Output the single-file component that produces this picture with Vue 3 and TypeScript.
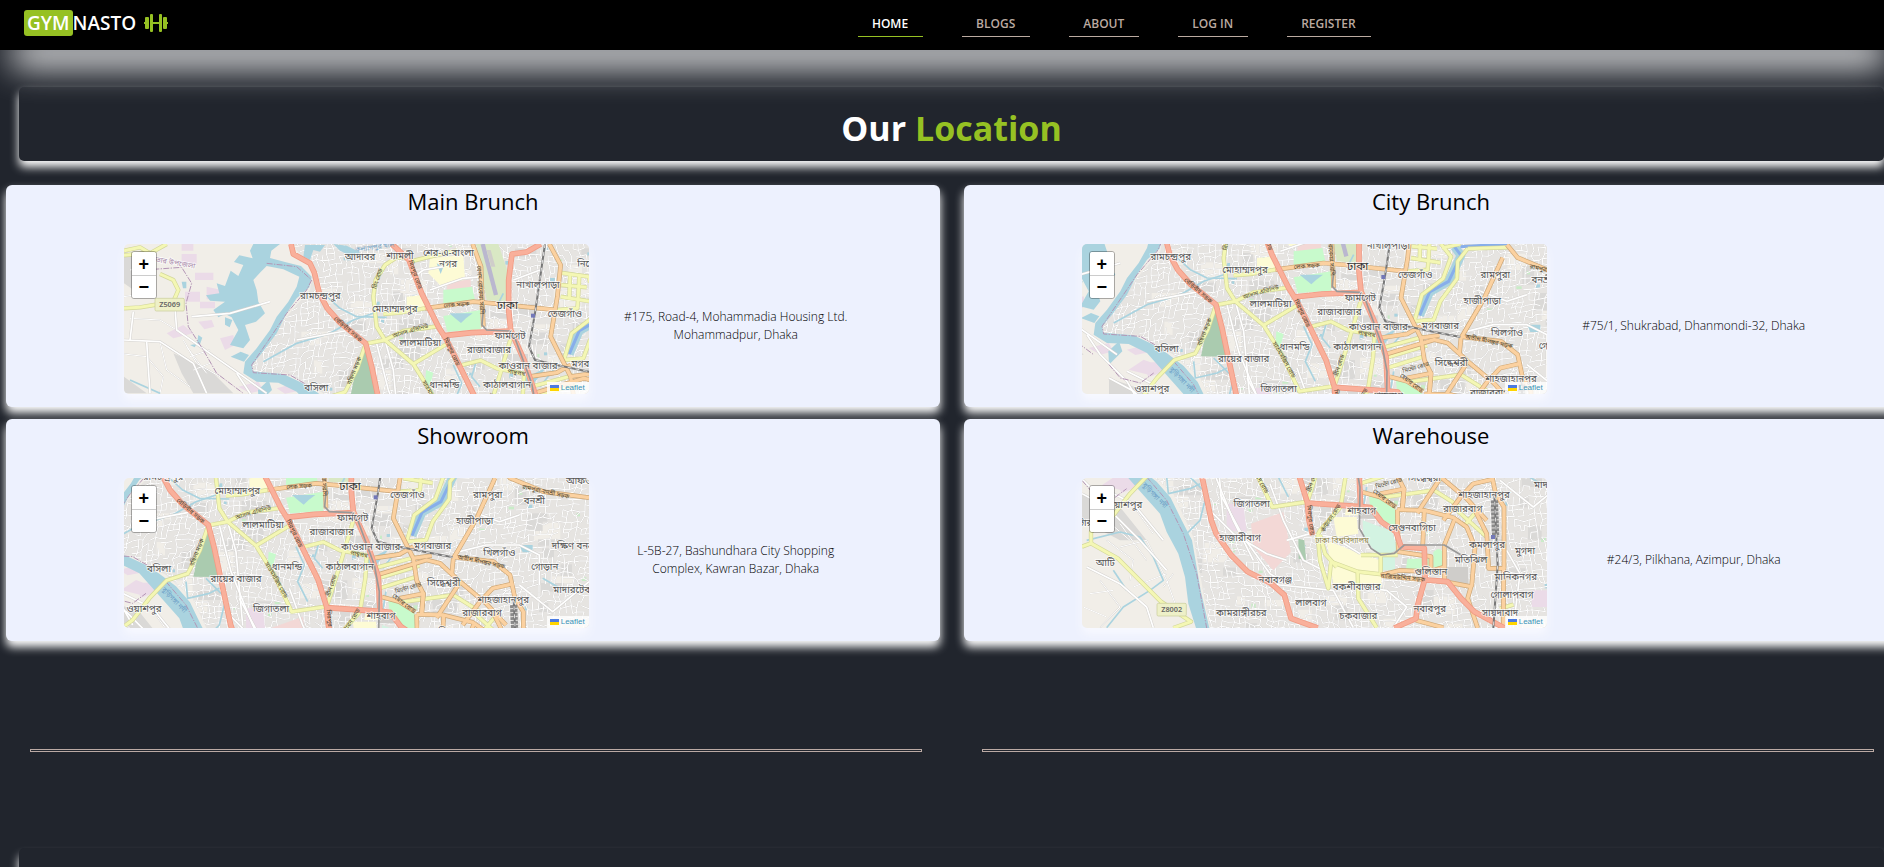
<script setup lang="ts">
import { reactive } from 'vue'

interface NavItem { label: string; active?: boolean }
interface Branch { id: string; title: string; address: string; x: number; y: number }
interface Label { t: string; x: number; y: number; r?: number; k?: string }

const nav: NavItem[] = [
  { label: 'HOME', active: true },
  { label: 'BLOGS' },
  { label: 'ABOUT' },
  { label: 'LOG IN' },
  { label: 'REGISTER' },
]

const branches: Branch[] = [
  { id: 'main', title: 'Main Brunch', address: '#175, Road-4, Mohammadia Housing Ltd. Mohammadpur, Dhaka', x: 42, y: 42 },
  { id: 'city', title: 'City Brunch', address: '#75/1, Shukrabad, Dhanmondi-32, Dhaka', x: 365, y: 158 },
  { id: 'showroom', title: 'Showroom', address: 'L-5B-27, Bashundhara City Shopping Complex, Kawran Bazar, Dhaka', x: 514, y: 199 },
  { id: 'warehouse', title: 'Warehouse', address: '#24/3, Pilkhana, Azimpur, Dhaka', x: 446, y: 513 },
]

const VIEW_W = 1395
const VIEW_H = 450
const zoom = reactive<Record<string, number>>({ main: 0, city: 0, showroom: 0, warehouse: 0 })

function viewBox(b: Branch): string {
  const s = Math.pow(2, -zoom[b.id])
  const w = VIEW_W * s
  const h = VIEW_H * s
  return `${b.x + (VIEW_W - w) / 2} ${b.y + (VIEW_H - h) / 2} ${w} ${h}`
}
function step(id: string, d: number) {
  zoom[id] = Math.max(0, Math.min(4, zoom[id] + d))
}

// Minor streets: a jittered net that bends slowly over the city.
function streetNet(): string {
  let seed = 7
  const rnd = () => {
    seed = (seed * 16807) % 2147483647
    return seed / 2147483647
  }
  const cell = 17
  const cols = 114
  const rows = 60
  const pts: number[][][] = []
  for (let j = 0; j < rows; j++) {
    const row: number[][] = []
    for (let i = 0; i < cols; i++) {
      const x = 10 + i * cell
      const y = 0 + j * cell
      row.push([
        Math.round(x + Math.sin(y / 130) * 24 + (rnd() - 0.5) * 10),
        Math.round(y + Math.sin(x / 170) * 26 + (rnd() - 0.5) * 10),
      ])
    }
    pts.push(row)
  }
  let d = ''
  for (let j = 0; j < rows - 1; j++) {
    for (let i = 0; i < cols - 1; i++) {
      const [x, y] = pts[j][i]
      if (rnd() < 0.68) d += `M${x},${y}L${pts[j][i + 1].join()}`
      if (rnd() < 0.68) d += `M${x},${y}L${pts[j + 1][i].join()}`
    }
  }
  return d
}
const streets = streetNet()

// Scattered blocks of slightly different land use.
function blocks(): { x: number; y: number; w: number; h: number; k: string }[] {
  let seed = 91
  const rnd = () => {
    seed = (seed * 16807) % 2147483647
    return seed / 2147483647
  }
  const kinds = ['dense', 'dense', 'plain', 'plain', 'pond', 'grass']
  return Array.from({ length: 190 }, (_, i) => {
    const k = kinds[i % kinds.length]
    const small = k === 'pond' || k === 'grass'
    return {
      x: Math.round(560 + rnd() * 1340),
      y: Math.round(40 + rnd() * 920),
      w: Math.round(small ? 6 + rnd() * 12 : 20 + rnd() * 60),
      h: Math.round(small ? 5 + rnd() * 9 : 18 + rnd() * 40),
      k,
    }
  })
}
const land = blocks()

const urban =
  'M545,42 L610,120 600,180 530,260 425,405 430,428 530,430 640,490 720,560 780,690 800,800 830,963 1909,963 1909,42Z'

const lanes: string[] = [
  'M195,232 L200,300 300,370 400,440 470,490', 'M42,330 L150,335 250,400 290,490', 'M110,335 L120,490',
  'M245,260 L360,250 480,215', 'M60,330 L70,245', 'M560,330 L720,300 765,338', 'M825,330 L850,420 870,640',
  'M800,340 L835,480 900,640 960,760', 'M960,180 L1060,145 1115,140', 'M900,150 L940,120 1000,110',
  'M1210,150 L1290,120', 'M1010,530 L1050,640 1110,760 1190,800', 'M860,560 L930,690 1010,800 1060,830',
  'M820,600 L900,680 1000,740 1060,760', 'M1000,830 L1200,850 1260,962', 'M1270,840 L1360,850 1420,900 1380,962',
  'M1520,420 L1600,400 1700,400 1760,430 1760,520', 'M1560,300 L1640,330 1700,310', 'M1700,520 L1800,600 1909,510',
  'M1720,730 L1760,800 1740,962', 'M460,780 L560,830 640,900 660,962', 'M446,560 L520,600 620,700 700,790',
  'M500,540 L600,590 690,700', 'M1060,700 L1130,680 1200,690 1280,740', 'M380,430 L420,490 500,570 540,640',
]
const farmLanes =
  'M42,372 L110,380 160,440 150,490 M150,335 L170,420 240,470 M200,300 L150,270 60,265 M220,330 L260,400 330,440 M240,380 L300,360 M250,420 L300,400 M230,350 L290,430 M520,700 L600,760 590,820 M560,650 L640,760 M500,820 L560,900 500,962 M600,840 L700,800 M640,700 L700,820 740,930 M470,860 L540,850 M610,610 L660,680 M560,720 L640,700 M520,640 L590,700 M690,840 L720,800 M450,900 L520,930 M80,90 L110,130 70,180 M60,120 L120,110 M42,200 L100,190'
const streams: string[] = [
  'M460,395 L560,340 660,310 730,270 790,250', 'M640,190 L690,235 740,260 830,262', 'M760,500 L820,560 800,640 740,700',
  'M1030,405 L1055,460 1035,510 1065,570', 'M1100,390 L1085,440 1110,470', 'M460,700 L560,675 620,690 660,750 690,820 650,850 570,900 520,962',
  'M540,790 L580,850', 'M1180,190 L1160,230', 'M1290,470 L1330,420', 'M1770,500 L1840,540', 'M1300,540 L1290,600',
  'M60,450 L150,490', 'M700,510 L705,560 770,545 800,530', 'M1050,850 L1060,900',
]
const yellow: string[] = [
  'M42,235 L90,232 150,222', 'M150,132 L190,150 205,180 190,215', 'M42,62 L90,52 120,70 170,42', 'M42,76 L120,68',
  'M900,85 L860,82 825,105 797,150 790,200 800,290 825,330', 'M820,252 L870,248 945,235', 'M767,341 L825,330 880,303 990,288',
  'M825,330 L910,402 965,490 1017,600 1118,585', 'M910,402 L1010,342', 'M900,95 L960,80 1040,62',
  'M767,341 L742,416 705,486 642,506 590,560 540,625 473,674 473,709 446,719', 'M473,709 L553,754 613,814 683,884 773,944 720,963',
  'M1052,406 L1112,391 1162,416 1242,431', 'M1202,326 L1165,450 1122,586', 'M1242,436 L1238,500 1222,600 1160,670 1153,684',
  'M1153,684 L1160,760 1185,844 1193,764 1273,794 1345,802', 'M1160,684 L1175,740 1210,780', 'M1283,744 L1393,744', 'M1273,796 L1275,874 1330,962',
  'M1350,128 L1437,140 1440,158', 'M1352,200 L1440,214', 'M1380,132 L1378,208', 'M1408,136 L1404,212', 'M1354,165 L1430,172', 'M1404,212 L1402,235 1340,240',
  'M1442,158 L1472,196 1448,262 1385,310 1362,390', 'M1522,172 L1492,210 1490,262 1440,330 1420,385 1362,390', 'M1522,172 L1645,168', 'M1445,170 L1500,158',
  'M1272,468 L1390,436', 'M1275,500 L1400,462', 'M1280,530 L1395,494', 'M1342,572 L1502,550 1582,600', 'M1640,600 L1590,660', 'M1560,600 L1660,690',
  'M1342,804 L1342,745', 'M1740,893 L1700,905',
]
const orange: string[] = [
  'M945,235 L1090,215 1190,224 1240,230 1340,240', 'M1088,42 L1113,110 1120,290', 'M1318,42 L1352,105 1342,200 1322,320 1382,440 1392,506 1412,546 1407,606',
  'M1627,199 L1572,320 1502,440 1497,490', 'M1640,160 L1672,199 1772,240 1909,258', 'M1272,490 L1422,445 1462,455 1522,510 1600,575 1660,640',
  'M1502,436 L1622,450 1672,490 1687,560 1712,600 1712,784 1666,784 1660,680 1620,600', 'M1711,780 L1710,963', 'M1392,608 L1472,610 1560,632 1600,660 1625,720 1615,839',
  'M1522,512 L1452,618', 'M1473,610 L1468,720', 'M1682,516 L1620,530 1582,570 1530,640', 'M1393,734 L1493,749 1493,800', 'M1343,804 L1400,790 1485,794 1533,780',
  'M1563,639 L1533,714 1533,824 1613,839 1603,874 1633,963', 'M1258,440 L1340,428 1382,405', 'M1380,440 L1437,432', 'M1407,606 L1412,546 1340,560', 'M1345,806 L1478,819 1543,824', 'M1392,608 L1395,734',
  'M1448,940 L1530,962', 'M1288,556 L1340,570 1388,600',
]
const red: string[] = [
  'M543,42 L550,72 600,100 613,128 628,190 652,235 690,278 767,340 785,410 802,490 834,640 848,679 893,744 943,794 1013,829 1053,864 1073,934 1153,963',
  'M845,42 L897,90 935,190 985,290 1010,330 1050,410 1097,506 1122,586 1127,640 1138,684', 'M1003,317 L1085,308 1205,303',
  'M1292,42 L1250,66 1206,72 1196,150 1196,240 1202,300 1242,390 1277,496 1282,600', 'M1122,588 L1283,599 1312,602 1345,645 1388,674 1403,719 1473,724 1475,815 1453,894 1448,934 1383,963',
  'M1478,819 L1543,824 1583,874 1623,914 1713,963',
]

const labels: Label[] = [
  { t: 'আদাবর', x: 750, y: 90 }, { t: 'শ্যামলী', x: 870, y: 86 }, { t: 'শের-এ-বাংলা', x: 1015, y: 78 }, { t: 'নগর', x: 1014, y: 112 },
  { t: 'নাখালপাড়া', x: 1284, y: 174 }, { t: 'রামচন্দ্রপুর', x: 631, y: 206 }, { t: 'মোহাম্মদপুর', x: 854, y: 246 },
  { t: 'ঢাকা', x: 1192, y: 236, k: 'big' }, { t: 'তেজগাঁও', x: 1364, y: 260 }, { t: 'লালমাটিয়া', x: 931, y: 348 },
  { t: 'ফার্মগেট', x: 1200, y: 328 }, { t: 'রাজাবাজার', x: 1137, y: 370 }, { t: 'কাওরান বাজার', x: 1254, y: 416 }, { t: 'মগবাজার', x: 1440, y: 412 },
  { t: 'ধানমন্ডি', x: 1003, y: 475 }, { t: 'কাঠালবাগান', x: 1191, y: 475 }, { t: 'বসিলা', x: 619, y: 482 }, { t: 'রায়ের বাজার', x: 850, y: 512 },
  { t: 'ওয়াশপুর', x: 574, y: 602 }, { t: 'জিগাতলা', x: 955, y: 601 }, { t: 'রামপুরা', x: 1605, y: 260 }, { t: 'বনশ্রী', x: 1745, y: 276 },
  { t: 'হাজীপাড়া', x: 1566, y: 338 }, { t: 'খিলগাঁও', x: 1640, y: 434 }, { t: 'গোড়ান', x: 1776, y: 474 }, { t: 'সিদ্ধেশ্বরী', x: 1473, y: 523 },
  { t: 'শাহজাহানপুর', x: 1652, y: 573 }, { t: 'রাজারবাগ', x: 1588, y: 614 }, { t: 'দক্ষিণ বনশ্রী', x: 1866, y: 412 }, { t: 'মাদারটেক', x: 1860, y: 544 },
  { t: 'আফতাবনগর', x: 1918, y: 216 }, { t: 'নিকেতন', x: 1450, y: 110 }, { t: 'শাহবাগ', x: 1285, y: 622 }, { t: 'সেগুনবাগিচা', x: 1436, y: 671 },
  { t: 'হাজারীবাগ', x: 920, y: 701 }, { t: 'ঢাকা বিশ্ববিদ্যালয়', x: 1226, y: 708, k: 'uni' }, { t: 'কমলাপুর', x: 1661, y: 722 }, { t: 'মুগদা', x: 1775, y: 740 },
  { t: 'মতিঝিল', x: 1613, y: 768 }, { t: 'গুলিস্তান', x: 1493, y: 803 }, { t: 'মানিকনগর', x: 1747, y: 819 }, { t: 'গোলাপবাগ', x: 1736, y: 872 },
  { t: 'আটি', x: 516, y: 776 }, { t: 'ঘাটারচর', x: 460, y: 657 }, { t: 'নবাবগঞ্জ', x: 1026, y: 828 }, { t: 'বকশীবাজার', x: 1270, y: 848 }, { t: 'লালবাগ', x: 1133, y: 896 },
  { t: 'নবাবপুর', x: 1489, y: 914 }, { t: 'সায়দাবাদ', x: 1700, y: 928 }, { t: 'চকবাজার', x: 1275, y: 936 }, { t: 'কামরাঙ্গীরচর', x: 924, y: 928 },
  { t: 'সাভার উপজেলা', x: 185, y: 104, r: 10, k: 'area' }, { t: 'কল্যাণপুর খাল', x: 795, y: 58, r: -8, k: 'river' }, { t: 'বুড়িগঙ্গা নদী', x: 660, y: 570, r: 46, k: 'river' },
  { t: 'মিরপুর রোড', x: 910, y: 136, r: 70, k: 'road' }, { t: 'মিরপুর রোড', x: 1020, y: 368, r: 65, k: 'road' }, { t: 'বেড়িবাঁধ সড়ক', x: 710, y: 302, r: 41, k: 'road' },
  { t: 'রিং রোড', x: 808, y: 148, r: -72, k: 'road' }, { t: 'লেক সড়ক', x: 1040, y: 230, r: -4, k: 'road' }, { t: 'আসাদ এভিনিউ', x: 903, y: 308, r: -16, k: 'road' },
  { t: 'বেগম রোকেয়া সরণি', x: 1106, y: 180, r: 86, k: 'road' }, { t: 'বছিলা সড়ক', x: 738, y: 424, r: -68, k: 'road' }, { t: 'সাতমসজিদ রোড', x: 966, y: 508, r: 60, k: 'road' },
  { t: 'পান্থপথ', x: 1218, y: 434, r: 10, k: 'road' }, { t: 'গ্রীন রোড', x: 1142, y: 524, r: -72, k: 'road' }, { t: 'রামপুরা-বনশ্রী সড়ক', x: 1778, y: 246, r: 12, k: 'road' },
  { t: 'অতীশ দীপঙ্কর সড়ক', x: 1585, y: 456, r: 12, k: 'road' }, { t: 'মিন্টো রোড', x: 1368, y: 534, r: -16, k: 'road' }, { t: 'হেয়ার রোড', x: 1350, y: 580, r: 38, k: 'road' },
  { t: 'মিরপুর রোড', x: 1126, y: 640, r: 84, k: 'road' }, { t: 'কাঁটাবন রোড', x: 1198, y: 636, r: -58, k: 'road' }, { t: 'নাজিমউদ্দিন সড়ক', x: 1408, y: 818, r: 5, k: 'road' },
]

const shields = [
  { t: 'Z5069', x: 135, y: 205 },
  { t: 'Z8002', x: 671, y: 889 },
]
</script>

<template>
  <div class="page">
    <header class="topbar">
      <a class="brand" href="#home">
        <span class="brand-mark">GYM</span><span class="brand-rest">NASTO</span>
        <svg class="dumbbell" viewBox="0 0 24 18" aria-hidden="true">
          <path d="M6 1a1 1 0 0 1 1-1h1a1 1 0 0 1 1 1v7h6V1a1 1 0 0 1 1-1h1a1 1 0 0 1 1 1v16a1 1 0 0 1-1 1h-1a1 1 0 0 1-1-1v-7H9v7a1 1 0 0 1-1 1H7a1 1 0 0 1-1-1zM1 4a1 1 0 0 1 1-1h2a1 1 0 0 1 1 1v10a1 1 0 0 1-1 1H2a1 1 0 0 1-1-1v-4H0V8h1zM19 4a1 1 0 0 1 1-1h2a1 1 0 0 1 1 1v4h1v2h-1v4a1 1 0 0 1-1 1h-2a1 1 0 0 1-1-1z" />
        </svg>
      </a>
      <nav class="nav" aria-label="Main">
        <a v-for="n in nav" :key="n.label" href="#" class="nav-link" :class="{ active: n.active }">{{ n.label }}</a>
      </nav>
    </header>

    <svg class="defs" aria-hidden="true">
      <defs>
        <clipPath id="urban-clip"><path :d="urban" /></clipPath>
        <g id="city">
          <rect x="0" y="0" width="2000" height="1000" class="ground" />
          <path class="dense" d="M42,160 L42,60 90,90 130,150 100,200Z M190,370 L300,420 370,490 250,490 215,430Z M42,440 L110,490 42,490Z M446,560 L560,600 640,700 560,700 446,640Z" />
          <path :d="urban" class="urban" />
          <g clip-path="url(#urban-clip)">
            <rect v-for="(b, i) in land" :key="i" :x="b.x" :y="b.y" :width="b.w" :height="b.h" :class="b.k" />
            <path :d="streets" class="street-case" />
            <path :d="streets" class="street" />
          </g>
          <path :d="farmLanes" class="street-case" />
          <path :d="farmLanes" class="street" />
          <path class="campus" d="M960,85 L1060,75 1065,150 990,165 955,130Z M890,200 L940,195 950,235 890,240Z M1200,630 L1270,630 1275,680 1210,690Z M1180,700 L1280,740 1340,760 1345,840 1200,830Z M1240,590 L1275,590 1275,625 1235,625Z" />
          <path class="pink" d="M1012,158 L1082,148 1084,198 1010,205Z M953,650 L1050,615 1073,735 1020,790 960,720Z" />
          <path class="lilac" d="M215,42h35v20h-35z M215,72h45v32h-45z M255,128h55v22h-55z M290,170l45,10v28h-45z M225,185h45v30h-45z M270,215h45v20h-45z M330,325l40,-10 5,30 -30,15z M265,275l40,-5 8,20 -30,8z M170,310l50,-25 30,25 -60,15z M385,470l60,-15 15,25 -40,10z M500,475l45,-12 20,20 -40,8z M505,535l45,-30 40,15 -25,30z M540,513h75l-10,30 -40,15z M880,590h50l10,85 -60,-5z M1795,850h50v50h-50z" />
          <path class="park" d="M1000,180 L1086,170 1095,210 1000,222Z M1000,258 L1112,240 1112,298 1012,305Z M1306,554 L1385,604 1388,650 1370,662 1345,645 1310,600Z M1422,755h70v38h-75z M1500,735q20,-20 30,5v40h-30z M948,420l22,8 -10,40 -15,-5z" />
          <path class="park soft" d="M1288,640 L1375,672 1393,725 1370,740 1330,738 1290,690Z M1345,740h40v50h-40z" />
          <path class="airfield" d="M1098,42 L1165,42 1205,160 1190,215 1130,210Z" />
          <path class="runway" d="M1118,42 L1158,195" />
          <path class="wood" d="M766,345 L742,400 722,495 800,496 790,430Z M1095,695l18,5 5,60 -22,-5z" />
          <path class="grey" d="M1540,780h65v50h-65z M1130,60h12l14,50h-12z M1280,615h55l-8,20h-50z" />
          <path class="water" d="M430,42 L510,42 484,62 480,84 525,96 573,108 605,140 598,172 560,205 530,250 500,310 455,370 426,405 428,424 520,432 575,458 620,486 670,524 712,572 742,634 776,700 790,780 802,850 828,963 788,963 765,890 755,810 735,740 700,675 680,620 640,575 600,530 560,485 505,458 440,455 400,430 405,395 440,355 480,300 500,260 535,215 560,170 568,140 520,118 470,108 452,126 430,150 440,180 445,215 465,250 438,275 405,285 420,330 400,355 360,345 385,300 365,262 345,252 325,262 310,240 345,215 300,212 288,196 328,190 320,160 345,168 362,122 385,138 400,105 372,96 388,76 428,85 420,62Z" />
          <path class="water" d="M362,380l30,-15 25,10 -15,20z M345,262l22,8 -8,22 -14,-8z M240,345l20,-3 -6,10z M265,315l12,8 -8,22 -8,-5z M215,155h14v20h-10z M585,45h60l-15,20 -20,-5 -10,30 -20,-10z M670,42l40,5 40,20 -20,15 -40,-20z M1018,250h70l-20,15 -15,14 -15,-12z M980,100l20,10 -8,22z M1245,445l38,-20 25,-12 -35,45 -25,12z M1700,400h40v22h-30z M446,520l40,-40 -10,-30 -32,30z" />
          <path v-for="d in streams" :key="d" :d="d" class="stream" />
          <path class="lake-edge" d="M1482,166 L1502,192 1465,270 1408,302 1378,372" />
          <path class="lake" d="M1482,166 L1502,192 1465,270 1408,302 1378,372 M1500,166 L1640,158" />
          <path v-for="d in lanes" :key="d" :d="d" class="lane-case" />
          <path v-for="d in lanes" :key="d + 'f'" :d="d" class="lane" />
          <path class="border-line" d="M130,118 L215,112 245,160 228,220 235,290 280,360 320,430 400,490 M470,100 L560,110 605,150 590,180 530,250 425,405 430,428 540,435 600,470 M446,520 L480,560 540,575 580,545 M640,510 L700,580 750,680 790,800 820,963" />
          <path v-for="d in yellow" :key="d" :d="d" class="yellow-case" />
          <path v-for="d in yellow" :key="d + 'f'" :d="d" class="yellow" />
          <path v-for="d in orange" :key="d" :d="d" class="orange-case" />
          <path v-for="d in orange" :key="d + 'f'" :d="d" class="orange" />
          <path v-for="d in red" :key="d" :d="d" class="red-case" />
          <path v-for="d in red" :key="d + 'f'" :d="d" class="red" />
          <path class="metro" d="M1120,240 L1116,285 1130,300 1198,303 1215,325 1265,460 1280,540 1278,664 1313,724 1343,744 1383,739 1413,714 1533,714 1583,744" />
          <path class="rail" d="M1305,42 L1275,250 1257,350 1275,390 1340,405 1437,425 1500,437" />
          <path class="rail-dash" d="M1305,42 L1275,250 1257,350 1275,390 1340,405 1437,425 1500,437" />
          <path class="rail-yard" d="M1683,580 L1687,690" />
          <path class="rail" d="M1683,560 L1693,774 1680,963" />
          <path class="rail-dash" d="M1683,560 L1693,774 1680,963" />
          <rect x="1263" y="251" width="12" height="12" class="station" />
          <rect x="1673" y="684" width="12" height="12" class="station" />
          <g v-for="s in shields" :key="s.t">
            <rect :x="s.x" :y="s.y" width="88" height="38" rx="4" class="shield" />
            <text :x="s.x + 44" :y="s.y + 26" class="shield-text">{{ s.t }}</text>
          </g>
          <text v-for="(l, i) in labels" :key="i" :x="l.x" :y="l.y" class="label" :class="l.k" :transform="l.r ? `rotate(${l.r} ${l.x} ${l.y})` : undefined">{{ l.t }}</text>
        </g>
      </defs>
    </svg>

    <main>
      <section class="banner">
        <h1>Our <span>Location</span></h1>
      </section>

      <section class="cards">
        <article v-for="b in branches" :key="b.id" class="card">
          <h2>{{ b.title }}</h2>
          <div class="card-body">
            <div class="map">
              <svg class="map-view" :viewBox="viewBox(b)" preserveAspectRatio="xMidYMid slice" role="img" :aria-label="b.title + ' map'">
                <use href="#city" />
              </svg>
              <div class="zoom">
                <button type="button" aria-label="Zoom in" @click="step(b.id, 1)">+</button>
                <button type="button" aria-label="Zoom out" @click="step(b.id, -1)">−</button>
              </div>
              <a class="credit" href="#leaflet">
                <svg viewBox="0 0 9 6" aria-hidden="true"><path fill="#4c7be1" d="M0 0h9v3H0z" /><path fill="#ffd500" d="M0 3h9v3H0z" /></svg>
                Leaflet
              </a>
            </div>
            <p class="address">{{ b.address }}</p>
          </div>
        </article>
      </section>

      <div class="rules">
        <hr />
        <hr />
      </div>

      <section class="panel"></section>
    </main>
  </div>
</template>

<style>
body {
  margin: 0;
  background: #21252d;
}
</style>

<style scoped>
.page {
  --glow: 0 6px 10px #fff;
  --lime: #96c123;
  display: flex;
  flex-direction: column;
  min-height: 100vh;
  overflow: hidden;
  background: #21252d;
  font-family: 'Segoe UI', 'Open Sans', 'Noto Sans', sans-serif;
}
.topbar {
  position: relative;
  z-index: 2;
  display: flex;
  align-items: center;
  height: 50px;
  margin-right: -14px;
  background: #000;
  box-shadow: 0 28px 34px -12px #fff;
}
.brand {
  display: flex;
  align-items: center;
  box-sizing: border-box;
  width: 45.2%;
  padding: 0 0 4px 24px;
  color: #fff;
  font-size: 19px;
  font-weight: 600;
  line-height: 26px;
  text-decoration: none;
}
.brand-mark {
  padding: 0 3px;
  border-radius: 3px;
  background: var(--lime);
}
.brand-rest {
  margin-right: 8px;
}
.dumbbell {
  width: 24px;
  height: 18px;
  fill: var(--lime);
}
.nav {
  display: flex;
  gap: 39px;
  padding-bottom: 2px;
}
.nav-link {
  padding: 0 15px 0 14px;
  border-bottom: 1px solid #bbaaa0;
  color: #bbaaa0;
  font-size: 12px;
  font-weight: 600;
  line-height: 24px;
  text-decoration: none;
}
.nav-link.active {
  border-color: var(--lime);
  color: #fff;
}
main {
  display: flex;
  flex: 1;
  flex-direction: column;
}
.banner {
  margin: 37px 0 0 19px;
  border-radius: 5px;
  background: #21252d;
  box-shadow: var(--glow);
  text-align: center;
}
h1 {
  margin: 0;
  padding-top: 8px;
  color: #fff;
  font-size: 34px;
  font-weight: 700;
  line-height: 66px;
}
h1 span {
  color: var(--lime);
}
.cards {
  display: grid;
  grid-template-columns: 1fr 1fr;
  gap: 12px 24px;
  margin: 24px -14px 0 6px;
}
.card {
  border-radius: 6px;
  background: #edf1fe;
  box-shadow: var(--glow);
}
h2 {
  margin: 0 0 27px;
  color: #000;
  font-size: 22px;
  font-weight: 500;
  line-height: 32px;
  text-align: center;
}
.card-body {
  display: grid;
  grid-template-columns: 2fr 8fr 5fr 1fr;
}
.map {
  position: relative;
  grid-column: 2;
  height: 150px;
  margin: 0 1px 13px;
  border-radius: 5px;
  box-shadow: 0 6px 10px #f8f9ff;
}
.map-view {
  display: block;
  width: 100%;
  height: 100%;
  border-radius: 5px;
}
.zoom {
  position: absolute;
  top: 7px;
  left: 7px;
  display: flex;
  flex-direction: column;
  border: 1px solid rgba(0, 0, 0, 0.3);
  border-radius: 3px;
  overflow: hidden;
}
.zoom button {
  width: 24px;
  height: 23px;
  padding: 0;
  border: 0;
  background: #fff;
  color: #000;
  font: bold 18px/22px 'Liberation Sans', sans-serif;
}
.zoom button + button {
  border-top: 1px solid #ccc;
}
.credit {
  position: absolute;
  right: 0;
  bottom: 0;
  display: flex;
  gap: 2px;
  align-items: center;
  padding: 0 4px 0 3px;
  border-bottom-right-radius: 5px;
  background: rgba(255, 255, 255, 0.8);
  color: #3a93b8;
  font: 8px/12px 'Liberation Sans', sans-serif;
  text-decoration: none;
}
.credit svg {
  width: 9px;
  height: 6px;
}
.address {
  align-self: center;
  margin: 0;
  padding: 0 24px;
  color: #000;
  font-size: 12px;
  font-weight: 300;
  line-height: 18px;
  text-align: center;
}
.rules {
  display: grid;
  grid-template-columns: 1fr 1fr;
  gap: 60px;
  margin: 108px 10px 0 30px;
}
hr {
  width: 100%;
  height: 3px;
  box-sizing: border-box;
  margin: 0;
  border: 1px solid #bbaaa4;
  background: #21252d;
}
.panel {
  flex: 1;
  min-height: 16px;
  margin: 96px 0 0 19px;
  border-radius: 5px 5px 0 0;
  background: #21252d;
  box-shadow: 0 8px 10px #fff;
}
.defs {
  position: absolute;
  width: 0;
  height: 0;
}
#city path { fill: none; stroke-linejoin: round; }
.ground { fill: #f1eee8; }
#city .urban { fill: #e6e4e1; }
#city .dense { fill: #dad9d7; }
#city .plain { fill: #f1eee8; }
#city .pond { fill: #aad3df; }
#city .grass { fill: #c9ecc8; }
#city .campus { fill: #fdfbd5; }
#city .pink { fill: #f3d8d6; }
#city .lilac { fill: #ebdbe8; }
#city .park { fill: #c8facc; }
#city .park.soft { fill: #d3f3e2; }
#city .airfield { fill: #d9e8c4; }
#city .runway { stroke: #bab7cf; stroke-width: 13; }
#city .wood { fill: #aacbaf; }
#city .grey { fill: #cfcdca; }
#city .water { fill: #aad3df; }
#city .stream { stroke: #aad3df; stroke-width: 5; }
#city .lake-edge { stroke: #aad3df; stroke-width: 26; }
#city .lake { stroke: #87aeea; stroke-width: 9; }
#city .street-case { stroke: #cfcdcb; stroke-width: 4; }
#city .street { stroke: #fff; stroke-width: 3; }
#city .lane-case { stroke: #d4d2cf; stroke-width: 8; }
#city .lane { stroke: #fff; stroke-width: 5; }
#city .border-line { stroke: #b395b5; stroke-width: 3; stroke-dasharray: 18 4 4 4; }
#city .yellow-case { stroke: #d3d79a; stroke-width: 13; }
#city .yellow { stroke: #f4f7b4; stroke-width: 9; }
#city .orange-case { stroke: #cda777; stroke-width: 14; }
#city .orange { stroke: #fbd1a0; stroke-width: 10; }
#city .red-case { stroke: #f19b84; stroke-width: 17; }
#city .red { stroke: #f9b09b; stroke-width: 12; }
#city .metro { stroke: #999; stroke-width: 5; }
#city .rail { stroke: #777; stroke-width: 6; }
#city .rail-dash { stroke: #ddd; stroke-width: 3; stroke-dasharray: 12 12; }
#city .rail-yard { stroke: #8a8a8a; stroke-width: 22; stroke-dasharray: 9 3; }
.station { fill: #7278b8; }
.shield {
  fill: #eef0c8;
  stroke: #c9cc98;
  stroke-width: 2;
}
.shield-text {
  fill: #666;
  font: 600 22px 'Noto Sans', sans-serif;
  text-anchor: middle;
}
.label {
  fill: #555;
  stroke: rgba(255, 255, 255, 0.75);
  stroke-width: 5px;
  paint-order: stroke;
  font: 29px 'Noto Sans', 'Noto Sans Bengali', 'FreeSans', sans-serif;
  text-anchor: middle;
}
.label.big { font-size: 34px; fill: #333; }
.label.road { font-size: 18px; fill: #4d4632; stroke: none; }
.label.river { font-size: 20px; fill: #6c9ec6; stroke: none; }
.label.area { font-size: 22px; fill: #a88aa9; }
.label.uni { font-size: 23px; fill: #8a7f45; }
</style>
